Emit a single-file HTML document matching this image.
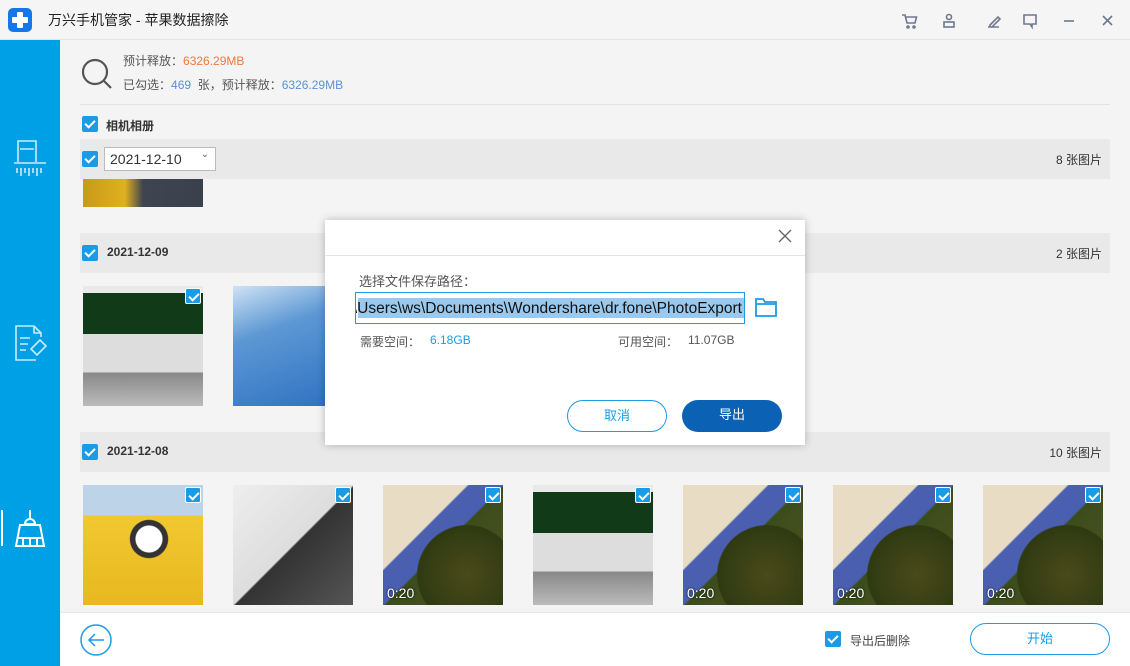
<!DOCTYPE html>
<html><head><meta charset="utf-8">
<style>
*{margin:0;padding:0;box-sizing:border-box}
body{width:1130px;height:666px;overflow:hidden;background:#f4f4f4;font-family:"Liberation Sans","Noto Sans CJK SC",sans-serif;position:relative;color:#333}
.abs{position:absolute}
.title{left:0;top:0;width:1130px;height:40px;background:#f5f5f5;border-bottom:1px solid #e4e4e4}
.side{left:0;top:40px;width:60px;height:626px;background:#00a0e6}
.cb{position:absolute;width:16px;height:16px;background:#1a9be6;border-radius:2px}
.cb::after{content:"";position:absolute;left:5px;top:2px;width:4px;height:8px;border:solid #fff;border-width:0 2px 2px 0;transform:rotate(45deg)}
.row{position:absolute;left:80px;width:1030px;height:40px;background:#e9e9e9}
.row .d{position:absolute;left:27px;top:12px;font-size:12px;font-weight:bold;color:#333}
.row .n{position:absolute;right:8px;top:12px;font-size:12px;color:#333}
.th{position:absolute;width:120px;height:120px;overflow:hidden}
.th .cb{top:2px;right:2px;border:1px solid #fff}
.dur{position:absolute;left:4px;bottom:4px;color:#fff;font-size:14px;text-shadow:0 0 2px #000}
.cart{background:linear-gradient(#e9e9e9 0,#e9e9e9 6%,#103a18 6%,#103a18 40%,#ddd 40%,#ddd 72%,#888 72%,#bbb 100%)}
.pine{background:radial-gradient(circle at 70% 75%,#4a4a1a 0,#2f3a12 40%,transparent 41%),linear-gradient(135deg,#e9dcc5 0,#e9dcc5 35%,#4a5fb0 36%,#4a5fb0 50%,#3a4d1c 51%,#5a5020 100%)}
.btn{position:absolute;border-radius:16px;font-size:13px;text-align:center;line-height:30px}
</style></head><body>
<div class="abs title">
  <div class="abs" style="left:8px;top:8px;width:24px;height:24px;background:#1677e8;border-radius:5px"></div>
  <div class="abs" style="left:17px;top:12px;width:6px;height:16px;background:#fff;border-radius:1px"></div>
  <div class="abs" style="left:12px;top:17px;width:16px;height:6px;background:#fff;border-radius:1px"></div>
  <div class="abs" style="left:48px;top:10px;font-size:14px;color:#222">万兴手机管家 - 苹果数据擦除</div>
  <svg class="abs" style="left:900px;top:12px" width="220" height="18" fill="none" stroke="#6e7893" stroke-width="1.6">
    <path d="M2 3h3l2 8h8l1.5-6H6"/><circle cx="8" cy="15" r="1"/><circle cx="14" cy="15" r="1"/>
    <circle cx="49" cy="5" r="2.5"/><rect x="44" y="10" width="10" height="5"/>
    <path d="M88 15h11M90 13l8-8 2 2-8 8h-2z"/>
    <path d="M124 3h12v9h-4v3l-2-3h-6z"/>
    <path d="M164 9h10"/>
    <path d="M203 4l9 9M212 4l-9 9"/>
  </svg>
</div>
<div class="abs side">
  <svg class="abs" style="left:12px;top:98px" width="36" height="42" fill="none" stroke="#cfeafa" stroke-width="1.6">
    <path d="M6 24V3h18v21M2 25h32M8 11h14"/><path d="M5 30v5M9 30v8M13 30v5M17 30v8M21 30v5M25 30v8M29 30v5"/>
  </svg>
  <svg class="abs" style="left:14px;top:285px" width="36" height="38" fill="none" stroke="#cfeafa" stroke-width="1.6">
    <path d="M20 1H2v34h20M20 1l7 7v4M20 1v7h7M6 13h10M6 19h8M6 25h6M17 24l9-9 6 6-9 9z"/>
  </svg>
  <div class="abs" style="left:1px;top:470px;width:2px;height:36px;background:#fff"></div>
  <svg class="abs" style="left:14px;top:469px" width="32" height="40" fill="none" stroke="#fff" stroke-width="2">
    <path d="M16 1v9M11 15a5 5 0 0 1 10 0M11 15h10M6 16h20l4 21H2zM9 29v8M16 29v8M23 29v8M3 29h26"/>
  </svg>
</div>
<svg class="abs" style="left:80px;top:58px" width="34" height="34" fill="none" stroke="#555" stroke-width="2.2"><circle cx="15" cy="14" r="12"/><path d="M24 23l7 7"/></svg>
<div class="abs" style="left:123px;top:52px;font-size:12px;color:#555">预计释放：<span style="color:#f0783c">6326.29MB</span></div>
<div class="abs" style="left:123px;top:76px;font-size:12px;color:#555">已勾选：<span style="color:#5b8fdc">469</span>&nbsp; 张，预计释放：<span style="color:#5b8fdc">6326.29MB</span></div>
<div class="abs" style="left:80px;top:104px;width:1030px;height:1px;background:#e3e3e3"></div>
<div class="cb" style="left:82px;top:116px"></div>
<div class="abs" style="left:106px;top:117px;font-size:12px;font-weight:bold">相机相册</div>
<div class="row" style="top:139px">
  <div class="cb" style="left:2px;top:12px"></div>
  <div class="abs" style="left:24px;top:8px;width:112px;height:24px;background:#fff;border:1px solid #bbb;font-size:14px;padding:3px 5px">2021-12-10<span style="position:absolute;right:6px;top:1px;font-size:10px;color:#666">&#8964;</span></div>
  <div class="n">8 张图片</div>
</div>
<div class="th" style="left:83px;top:179px;height:28px;background:linear-gradient(90deg,#c89a18 0,#e0b020 35%,#3e4450 50%,#3a404c 100%)"></div>
<div class="row" style="top:233px"><div class="cb" style="left:2px;top:12px"></div><div class="d">2021-12-09</div><div class="n">2 张图片</div></div>
<div class="th cart" style="left:83px;top:286px"><div class="cb"></div></div>
<div class="th" style="left:233px;top:286px;background:linear-gradient(160deg,#cfe2f4 0,#5d98d4 35%,#2d6fc0 100%)"></div>
<div class="row" style="top:432px"><div class="cb" style="left:2px;top:12px"></div><div class="d">2021-12-08</div><div class="n">10 张图片</div></div>
<div class="th" style="left:83px;top:485px;background:radial-gradient(circle at 55% 45%,#fff 0,#fff 14%,#333 15%,#333 20%,transparent 21%),linear-gradient(#bcd3e8 0,#bcd3e8 25%,#f1c830 26%,#e8b820 100%)"><div class="cb"></div></div>
<div class="th" style="left:233px;top:485px;background:linear-gradient(135deg,#eee 0,#ddd 50%,#333 51%,#555 100%)"><div class="cb"></div></div>
<div class="th pine" style="left:383px;top:485px"><div class="cb"></div><div class="dur">0:20</div></div>
<div class="th cart" style="left:533px;top:485px"><div class="cb"></div></div>
<div class="th pine" style="left:683px;top:485px"><div class="cb"></div><div class="dur">0:20</div></div>
<div class="th pine" style="left:833px;top:485px"><div class="cb"></div><div class="dur">0:20</div></div>
<div class="th pine" style="left:983px;top:485px"><div class="cb"></div><div class="dur">0:20</div></div>
<div class="abs" style="left:60px;top:612px;width:1070px;height:54px;background:#fff;border-top:1px solid #e6e6e6"></div>
<svg class="abs" style="left:80px;top:624px" width="34" height="34" fill="none" stroke="#1a9be6" stroke-width="1.5"><circle cx="16" cy="16" r="15"/><path d="M24 16H9M15 10l-6 6 6 6"/></svg>
<div class="cb" style="left:825px;top:631px"></div>
<div class="abs" style="left:850px;top:632px;font-size:12px;color:#444">导出后删除</div>
<div class="btn" style="left:970px;top:623px;width:140px;height:32px;border:1px solid #1a9be6;color:#1a9be6">开始</div>
<div class="abs" style="left:325px;top:220px;width:480px;height:225px;background:#fff;box-shadow:0 0 8px rgba(0,0,0,.25)">
  <div class="abs" style="left:0;top:35px;width:480px;height:1px;background:#e3e3e3"></div>
  <svg class="abs" style="left:453px;top:9px" width="14" height="14" stroke="#666" stroke-width="1.4"><path d="M1 1l12 12M13 1L1 13"/></svg>
  <div class="abs" style="left:34px;top:51px;font-size:13px;color:#555">选择文件保存路径：</div>
  <div class="abs" style="left:30px;top:72px;width:390px;height:32px;border:1px solid #1a9be6;overflow:hidden">
    <div class="abs" style="left:2px;top:5px;width:386px;height:20px;background:#99c9ef"></div>
    <div class="abs" style="right:2px;top:6px;font-size:15.5px;line-height:20px;color:#111;white-space:nowrap">,\Users\ws\Documents\Wondershare\dr.fone\PhotoExport</div>
  </div>
  <svg class="abs" style="left:430px;top:77px" width="22" height="20" fill="none" stroke="#1a9be6" stroke-width="1.8"><path d="M1 2h7l2 3h11v14H1zM1 7h20"/></svg>
  <div class="abs" style="left:35px;top:113px;font-size:12px;color:#555">需要空间：</div>
  <div class="abs" style="left:105px;top:113px;font-size:12px;color:#1a9be6">6.18GB</div>
  <div class="abs" style="left:293px;top:113px;font-size:12px;color:#555">可用空间：</div>
  <div class="abs" style="left:363px;top:113px;font-size:12px;color:#555">11.07GB</div>
  <div class="btn" style="left:242px;top:180px;width:100px;height:32px;border:1px solid #1a9be6;color:#1a9be6">取消</div>
  <div class="btn" style="left:357px;top:180px;width:100px;height:32px;background:#0b62b4;color:#fff">导出</div>
</div>
</body></html>
